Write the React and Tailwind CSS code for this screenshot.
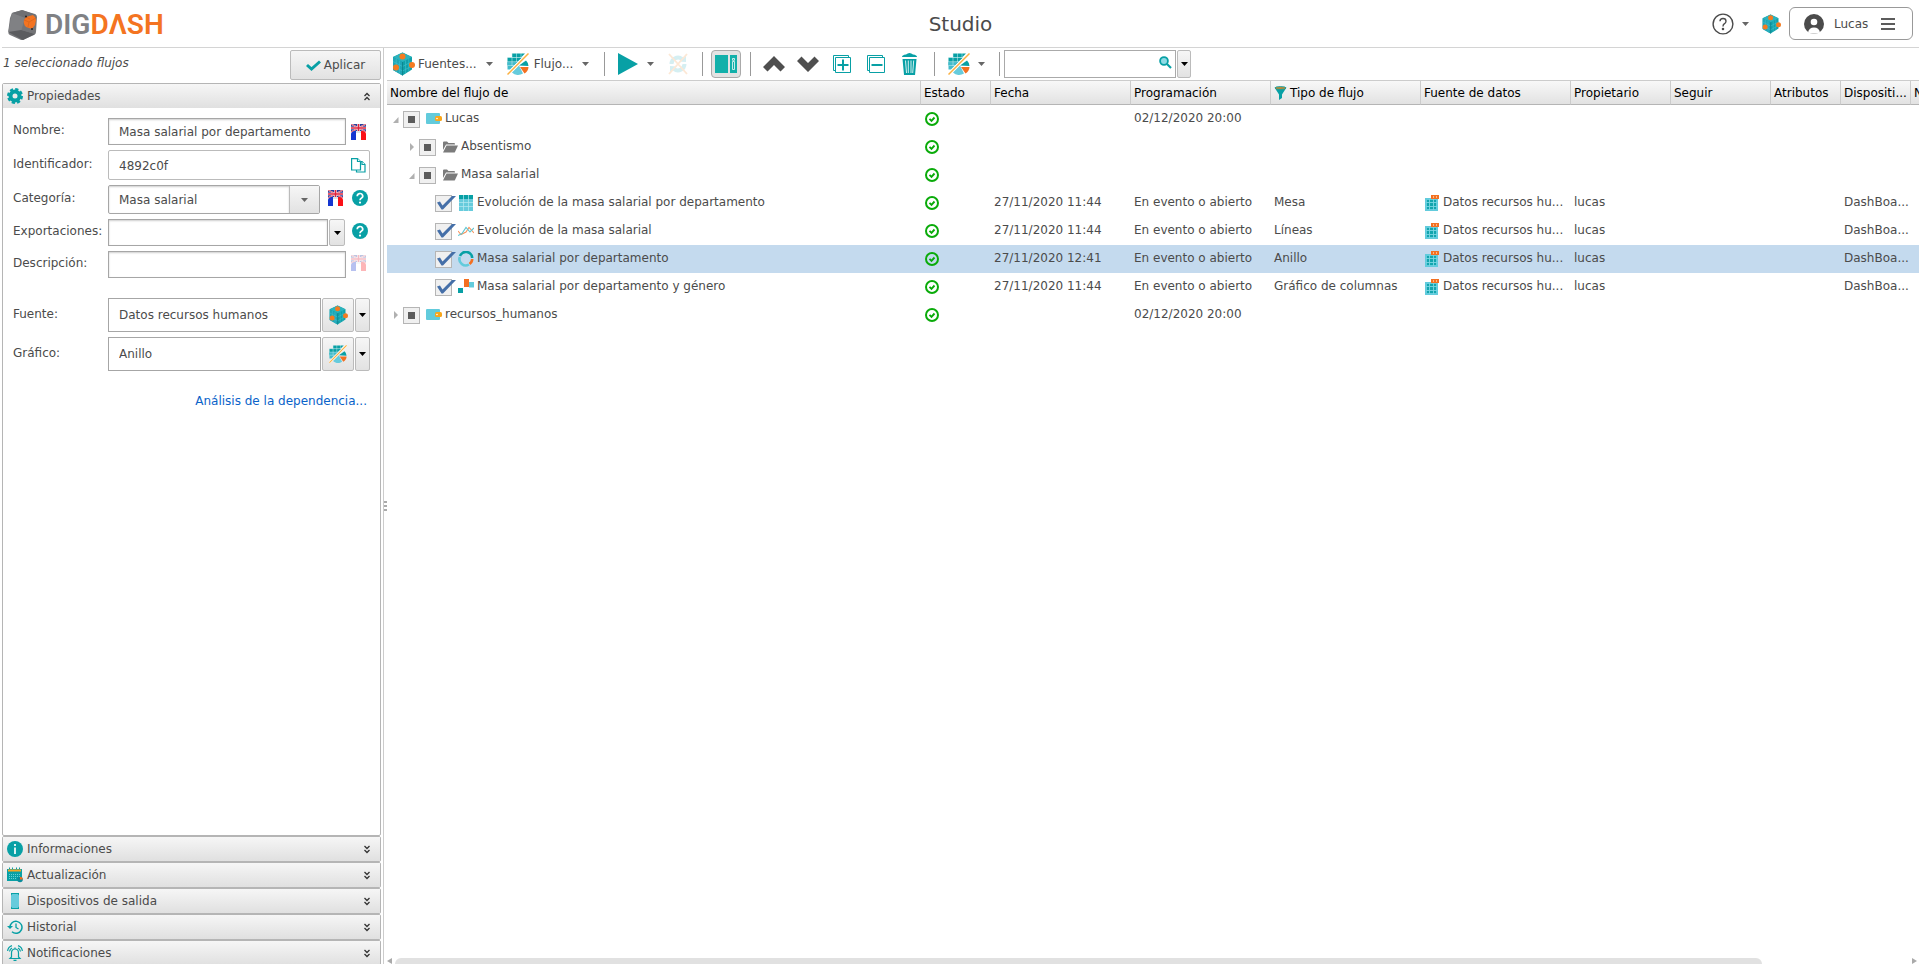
import React, { useState } from 'react';

const Caret = ({ className = 'text-[#666]', small = false }) => (
  <svg width={small ? 7 : 8} height={small ? 4 : 6} viewBox="0 0 8 6" preserveAspectRatio="none" className={`shrink-0 ${className}`}>
    <path d="M0 0H8L4 6Z" fill="currentColor" />
  </svg>
);

const CubeIcon = ({ size = 24 }) => (
  <svg width={size} height={size} viewBox="0 0 24 24" className="shrink-0">
    <path d="M11.500 0.500L21 5V17.500L11.500 23.500L2 18V5Z" fill="#10a0a8" />
    <path d="M11.500 0.500L21 5L11.500 10L2 5Z" fill="#2bb3bd" />
    <path d="M2 5L11.500 10V23.500L2 18Z" fill="#1fa6b6" />
    <path d="M2 9.500L11.500 14.500L21 9.500M2 14L11.500 19L21 14M5.200 6.500V20M8.400 8.500V22M14.600 8.500V21.500M17.800 6.500V19.500" stroke="#45c2d0" strokeWidth=".6" fill="none" />
    <path d="M11.500 10V23.500" stroke="#0a7f88" strokeWidth=".8" />
    <circle cx="11.500" cy="4.500" r="3" fill="#f47b20" />
    <circle cx="5" cy="15.500" r="3" fill="#f47b20" />
    <circle cx="21" cy="13" r="3" fill="#f47b20" />
  </svg>
);

const ChartIcon = ({ size = 22 }) => (
  <svg width={size} height={size} viewBox="0 0 22 22" className="shrink-0">
    <path d="M5 0.500H18L14 4.500H5Z" fill="#08a0a5" />
    <path d="M0.500 4.500H15L6 13H0.500Z" fill="#08a0a5" />
    <path d="M0.500 8.700H10.500L3 16.500H0.500Z" fill="#42bccb" />
    <path d="M5 0V13M9.500 0V9M14 0V5M0 4.500H16M0 8.700H11M0 12.500H7" stroke="#d5f0f4" strokeWidth=".5" />
    <path d="M12 12.500L19 7.500A8 8 0 0 1 21.500 13Z" fill="#08a0a5" />
    <path d="M12 12.500L5 19.500A9 9 0 0 0 16 20.500Z" fill="#66cbdc" />
    <path d="M13 14H21.500A8 8 0 0 1 17.500 20.500Z" fill="#f37021" />
    <path d="M0.500 21.500L21.500 0.500" stroke="#fff" strokeWidth="2.600" />
    <path d="M0.500 21.500L21.500 0.500" stroke="#fbb040" strokeWidth="1.500" />
  </svg>
);

const FlagIcon = ({ faded = false }) => (
  <svg width="15" height="16" viewBox="0 0 15 16" className={`shrink-0 ${faded ? 'opacity-30' : ''}`}>
    <path d="M0 0H15V8H0Z" fill="#2a3f9b" />
    <path d="M0 0L15 8M15 0L0 8" stroke="#fff" strokeWidth="1.400" />
    <path d="M0 0L15 8M15 0L0 8" stroke="#e0213a" strokeWidth=".8" />
    <path d="M7.500 0V8M0 4H15" stroke="#fff" strokeWidth="2.600" />
    <path d="M7.500 0V8M0 4H15" stroke="#e0213a" strokeWidth="1.600" />
    <path d="M0 16V10Q0 7.500 4 7H5V16Z" fill="#1536d0" />
    <path d="M5 7H10V16H5Z" fill="#fff" />
    <path d="M15 16V10Q15 7.500 11 7H10V16Z" fill="#fb1017" />
    <path d="M5 8H10" stroke="#9aa" strokeWidth=".6" />
  </svg>
);

const HelpIcon = () => (
  <svg width="16" height="16" viewBox="0 0 16 16">
    <circle cx="8" cy="8" r="8" fill="#08a0a5" />
    <path d="M5.300 6.200A2.700 2.500 0 1 1 9.300 8.200Q8 9 8 10.300" stroke="#fff" strokeWidth="1.700" fill="none" />
    <circle cx="8" cy="12.600" r="1.100" fill="#fff" />
  </svg>
);

const CopyIcon = () => (
  <svg width="15" height="15" viewBox="0 0 15 15" fill="#fff" stroke="#08a0a5" strokeWidth="1.200">
    <path d="M5.500 3.600H11L14 6.500V14H5.500Z" />
    <path d="M11 3.600V6.500H14" />
    <path d="M.6.600H6.500L9.500 3.500V12H.6Z" />
    <path d="M6.500.600V3.500H9.500" />
  </svg>
);

const GearIcon = () => (
  <svg width="16" height="16" viewBox="0 0 16 16">
    <circle cx="8" cy="8" r="4.500" fill="none" stroke="#08a0a5" strokeWidth="4" />
    <circle cx="8" cy="8" r="6.800" fill="none" stroke="#08a0a5" strokeWidth="2.400" strokeDasharray="3.200 2.140" />
  </svg>
);

const InfoIcon = () => (
  <svg width="16" height="16" viewBox="0 0 16 16">
    <circle cx="8" cy="8" r="8" fill="#08a0a5" />
    <path d="M8 3V5M8 6.500V13" stroke="#fff" strokeWidth="1.700" />
  </svg>
);

const CalendarIcon = () => (
  <svg width="16" height="16" viewBox="0 0 16 16">
    <path d="M0 2H15V14H0Z" fill="#08a0a5" />
    <path d="M1 2.500H14V4.500H1Z" fill="#f5a623" />
    <path d="M2.500 0.500V2M5.500 0.500V2M9.500 0.500V2M12.500 0.500V2" stroke="#08a0a5" />
    <path d="M2 7.500H14M2 9.500H14M2 11.500H10" stroke="#7fdbe2" strokeWidth=".8" strokeDasharray="1 1" />
    <circle cx="13" cy="12.500" r="2.800" fill="#0b8c9c" />
    <path d="M13 12.500V9.700A2.800 2.800 0 0 1 15.800 12.500Z" fill="#f37021" />
  </svg>
);

const PhoneIcon = () => (
  <svg width="16" height="16" viewBox="0 0 16 16">
    <rect x="4" width="8" height="16" rx="1" fill="#66cbdc" />
    <path d="M4 0H6L4 2.500ZM12 0H10L12 2.500ZM4 16H6L4 13.500ZM12 16H10L12 13.500Z" fill="#08a0a5" />
    <path d="M5 .5H11M5 15.500H11" stroke="#08a0a5" />
  </svg>
);

const HistoryIcon = () => (
  <svg width="16" height="16" viewBox="0 0 16 16" fill="none" stroke="#08a0a5" strokeWidth="1.500">
    <path d="M3 9A6 6 0 1 1 5 12.800" />
    <path d="M0 7L3 10L6 7Z" fill="#08a0a5" stroke="none" />
    <path d="M9 4.500V8.500L11.500 10" strokeWidth="1.300" />
  </svg>
);

const BellIcon = () => (
  <svg width="16" height="16" viewBox="0 0 16 16" fill="none" stroke="#08a0a5" strokeWidth="1.200">
    <path d="M4.500 12V8Q4.500 4 8 4Q11.500 4 11.500 8V12L13 13.500H3Z" />
    <path d="M6.500 15.300H9.500M8 4V2.500" />
    <path d="M.6 6Q1 2 5 .6M2.500 6.500Q3 4 5 3M15.400 6Q15 2 11 .6M13.500 6.500Q13 4 11 3" />
  </svg>
);

const DoubleChevron = ({ up }) => (
  <svg width="6" height="9" viewBox="0 0 6 9" fill="none" stroke="#333" strokeWidth="1.300" className={up ? '' : 'rotate-180'}>
    <path d="M.5 4L3 1.500L5.500 4M.5 8L3 5.500L5.500 8" />
  </svg>
);

const WalletIcon = () => (
  <svg width="16" height="12" viewBox="0 0 16 12">
    <rect width="14" height="11" rx="1" fill="#62cbdc" />
    <rect x="9" y="3" width="7" height="5" rx="1.500" fill="#f9a61a" />
    <circle cx="11" cy="5.500" r=".8" fill="#fff" />
  </svg>
);

const FolderIcon = () => (
  <svg width="16" height="12" viewBox="0 0 16 12" fill="#7b7b7b">
    <path d="M1 9V1.500Q1 .5 2 .5H5L6.500 2H12Q13 2 13 3V3.500H4Z" />
    <path d="M4.500 4.500H16L13 11Q12.700 11.500 12 11.500H1Z" />
  </svg>
);

const GridIcon = () => (
  <svg width="16" height="16" viewBox="0 0 16 16">
    <path d="M1 0H15V16H1Z" fill="#66cbdc" />
    <path d="M1 0H15V4H1Z" fill="#08a0a5" />
    <path d="M5.500 0V16M10.500 0V16M1 7.500H15M1 11.500H15" stroke="#b7eaf1" strokeWidth=".7" />
  </svg>
);

const LinesIcon = () => (
  <svg width="16" height="16" viewBox="0 0 16 16" fill="none">
    <path d="M0 8L3 11.500L8 9L11 4.500L16 10" stroke="#f9925a" strokeWidth="1.100" />
    <path d="M0 12.500L4 10.500L8 4.500L12 9L16 5" stroke="#5fc6d3" strokeWidth="1.100" />
  </svg>
);

const RingIcon = () => (
  <svg width="16" height="16" viewBox="0 0 16 16" fill="none" strokeWidth="2.600">
    <path d="M2 5A6.300 6.300 0 0 1 14.200 7" stroke="#08a0a5" />
    <path d="M14.200 8A6.300 6.300 0 0 1 11.500 13" stroke="#f37021" />
    <path d="M11 13.500A6.300 6.300 0 0 1 1.800 6" stroke="#62cbdc" />
  </svg>
);

const ColumnsIcon = () => (
  <svg width="16" height="16" viewBox="0 0 16 16">
    <path d="M0 9H5V14H0Z" fill="#08a0a5" />
    <path d="M6 0H11V8H6Z" fill="#f37021" />
    <path d="M11 3H16V8.500H11Z" fill="#62cbdc" />
  </svg>
);

const SourceIcon = () => (
  <svg width="15" height="16" viewBox="0 0 15 16" className="shrink-0">
    <path d="M1 3H14V16H1Z" fill="#62cbdc" />
    <path d="M3 5H12V14H3Z" fill="#12a5ae" />
    <path d="M5.500 4V15M9.500 4V15M2 7.500H13M2 11.500H13" stroke="#7ad6e2" strokeWidth=".9" />
    <path d="M7 0H15V4H7Z" fill="#f37021" />
    <path d="M9.500 1V3M12.500 1V3" stroke="#fbb98a" />
  </svg>
);

const StatusOk = () => (
  <svg width="16" height="14" viewBox="0 0 16 14" role="img" aria-label="OK">
    <circle cx="8" cy="7" r="6" fill="none" stroke="#0aab0a" strokeWidth="2" />
    <path d="M5.500 6.800L7.500 8.800L10.500 5.500" fill="none" stroke="#0aab0a" strokeWidth="1.900" />
  </svg>
);

const FunnelIcon = () => (
  <svg width="13" height="14" viewBox="0 0 13 14">
    <path d="M.5 1.500H12.500L8 8.500V12L5 14V8.500Z" fill="#08a0a5" />
    <ellipse cx="6.500" cy="2" rx="5.500" ry="1.500" fill="#b58a3a" stroke="#08a0a5" strokeWidth=".8" />
  </svg>
);

const inputClass = 'h-full w-full min-w-0 border border-[#a6a6a6] bg-white pl-[10px] shadow-[inset_0_1px_2px_#cfcfcf] outline-none';
const buttonClass = 'flex items-center justify-center rounded-[2px] border border-[#bbb] bg-linear-to-b from-[#f6f6f6] to-[#e2e2e2]';

const Field = ({ id, label, height, children }) => (
  <div className={`flex ${height}`}>
    <label htmlFor={id} className="flex w-[95px] shrink-0 items-center pb-[3px]">{label}</label>
    <div className="flex min-w-0 flex-1 items-center">{children}</div>
  </div>
);

const Logo = () => (
  <a href="#" className="flex items-center gap-[7px]" aria-label="DigDash">
    <svg width="30" height="31" viewBox="0 0 30 31">
      <path d="M4 3L13 .5Q15 0 17 1L27 4Q29 5 29 7L28 22Q28 24 26 25L16 29.500Q14 30.500 12 29.500L2 25Q0 24 .3 21L2 8Z" fill="#77787b" />
      <path d="M4 3L14 0L28 5L17 8Z" fill="#6f7073" />
      <path d="M4 3L17 8L13 21L.3 22Z" fill="#808184" />
      <path d="M.3 22L13 20L27 24L15 30Z" fill="#5b5c5f" />
      <path d="M17 8L28 5L27 24L14 20Z" fill="#737477" />
      <path d="M18 7L25 5Q28 7 28 10L27 15L24 19L18 17Q15 14 16 10Z" fill="#f47421" />
      <path d="M16 10L21 12L28 8M21 12L20 17M18 7L22 9" stroke="#d9641a" strokeWidth=".8" fill="none" />
      <circle cx="18" cy="6.500" r="1" fill="#222" />
      <circle cx="24" cy="19" r="1" fill="#222" />
    </svg>
    <span className="font-[Roboto,sans-serif] text-[28px] leading-8 font-semibold">
      <span className="text-[#808184]">DIG</span>
      <span className="text-[#f47421]">DΛSH</span>
    </span>
  </a>
);

const Header = () => (
  <header className="ml-[2px] flex h-12 shrink-0 items-center border-b border-[#d4d4d4] pl-[6px]">
    <div className="flex-1 pt-[3px]"><Logo /></div>
    <h1 className="text-xl text-[#4b4b4b]">Studio</h1>
    <div className="flex flex-1 items-center justify-end pr-[6px]">
      <button type="button" className="flex items-center gap-2" aria-label="Ayuda">
        <svg width="22" height="22" viewBox="0 0 22 22" fill="none" stroke="#4b4b4b" strokeWidth="1.400">
          <circle cx="11" cy="11" r="9.900" />
          <path d="M8 8.300Q8 5.500 11 5.500Q14 5.500 14 8.200Q14 9.800 12.200 10.900Q11 11.700 11 13.500" />
          <circle cx="11" cy="16" r=".6" fill="#4b4b4b" />
        </svg>
        <Caret small />
      </button>
      <button type="button" className="mr-2 ml-3" aria-label="Fuentes"><CubeIcon size={20} /></button>
      <button type="button" className="flex h-[33px] w-[124px] items-center rounded-md border border-[#999] pl-[14px]">
        <svg width="20" height="20" viewBox="0 0 20 20">
          <circle cx="10" cy="10" r="10" fill="#4b4b4b" />
          <circle cx="10" cy="8" r="3.300" fill="#fff" />
          <path d="M4 18.500Q5 13.500 10 13.500Q15 13.500 16 18.500Q10 21 4 18.500Z" fill="#fff" />
        </svg>
        <span className="ml-[10px]">Lucas</span>
        <svg width="14" height="12" viewBox="0 0 14 12" className="ml-[13px]">
          <path d="M0 1H14M0 6H14M0 11H14" stroke="#5c5c5c" strokeWidth="2" />
        </svg>
      </button>
    </div>
  </header>
);

const SectionHeader = ({ icon, title, open }) => (
  <button type="button" className="flex h-6 w-full items-center gap-1 bg-linear-to-b from-[#f6f6f6] to-[#e0e0e0] pr-[10px] pl-1 text-left">
    {icon}
    <span className="flex-1">{title}</span>
    <DoubleChevron up={open} />
  </button>
);

const SECTIONS = [
  { title: 'Informaciones', icon: <InfoIcon /> },
  { title: 'Actualización', icon: <CalendarIcon /> },
  { title: 'Dispositivos de salida', icon: <PhoneIcon /> },
  { title: 'Historial', icon: <HistoryIcon /> },
  { title: 'Notificaciones', icon: <BellIcon /> },
];

const PropertiesPanel = () => (
  <aside className="flex w-[381px] shrink-0 flex-col overflow-hidden pl-[2px]">
    <div className="mt-[2px] mb-[3px] flex h-[30px] shrink-0 justify-between">
      <em className="pt-[5px] pl-px">1 seleccionado flujos</em>
      <button type="button" className={`${buttonClass} w-[91px] gap-[3px]`}>
        <svg width="15" height="11" viewBox="0 0 15 11"><path d="M1 5L5.500 9L14 1.500" fill="none" stroke="#08a0a5" strokeWidth="3" /></svg>
        Aplicar
      </button>
    </div>
    <section className="flex flex-1 flex-col rounded-[2px] border border-[#b5b5b5]">
      <SectionHeader icon={<GearIcon />} title="Propiedades" open />
      <form className="flex flex-col gap-[5px] pt-[10px] pr-[10px] pl-[10px]">
        <Field id="nombre" label="Nombre:" height="h-[27px]">
          <input id="nombre" className={inputClass} defaultValue="Masa salarial por departamento" />
          <span className="w-6 shrink-0 pl-[5px]"><FlagIcon /></span>
        </Field>
        <Field id="identificador" label="Identificador:" height="h-[30px]">
          <div className="flex h-full flex-1 items-center rounded-[2px] border border-[#bbb] pr-[3px]">
            <input id="identificador" className="min-w-0 flex-1 pt-[2px] pl-[10px] outline-none" defaultValue="4892c0f" readOnly />
            <button type="button" aria-label="Copiar"><CopyIcon /></button>
          </div>
        </Field>
        <Field id="categoria" label="Categoría:" height="h-[29px]">
          <div className="flex h-full w-[212px] rounded-[2px] border border-[#a6a6a6]">
            <select id="categoria" className="min-w-0 flex-1 appearance-none pl-[10px] shadow-[inset_0_1px_2px_#cfcfcf] outline-none">
              <option>Masa salarial</option>
            </select>
            <span className="flex w-[30px] items-center justify-center border-l border-[#bbb] bg-linear-to-b from-[#f6f6f6] to-[#e2e2e2]"><Caret small /></span>
          </div>
          <span className="flex flex-1 justify-between pr-[2px] pb-[3px] pl-2"><FlagIcon /><HelpIcon /></span>
        </Field>
        <Field id="exportaciones" label="Exportaciones:" height="h-[27px]">
          <input id="exportaciones" className={inputClass} />
          <button type="button" className={`${buttonClass} ml-px h-full w-4 shrink-0`} aria-label="Elegir exportaciones"><Caret small className="text-black" /></button>
          <span className="w-[25px] shrink-0 pb-[3px] pl-[7px]"><HelpIcon /></span>
        </Field>
        <Field id="descripcion" label="Descripción:" height="h-[27px]">
          <input id="descripcion" className={inputClass} />
          <span className="w-6 shrink-0 pb-[3px] pl-[5px]"><FlagIcon faded /></span>
        </Field>
        <div className="mt-[15px] flex flex-col gap-[5px]">
          <Field id="fuente" label="Fuente:" height="h-[34px]">
            <input id="fuente" className="h-full min-w-0 flex-1 border border-[#a6a6a6] pl-[10px]" defaultValue="Datos recursos humanos" />
            <button type="button" className={`${buttonClass} ml-px h-full w-8`} aria-label="Fuente"><CubeIcon size={20} /></button>
            <button type="button" className={`${buttonClass} ml-px h-full w-[15px]`} aria-label="Opciones de fuente"><Caret small className="text-black" /></button>
          </Field>
          <Field id="grafico" label="Gráfico:" height="h-[34px]">
            <input id="grafico" className="h-full min-w-0 flex-1 border border-[#a6a6a6] pl-[10px]" defaultValue="Anillo" />
            <button type="button" className={`${buttonClass} ml-px h-full w-8`} aria-label="Gráfico"><ChartIcon size={18} /></button>
            <button type="button" className={`${buttonClass} ml-px h-full w-[15px]`} aria-label="Opciones de gráfico"><Caret small className="text-black" /></button>
          </Field>
        </div>
        <a href="#" className="mt-[17px] self-end pr-[3px] text-[#0a63c9]">Análisis de la dependencia...</a>
      </form>
    </section>
    {/* the last section runs slightly under the window edge */}
    <div className="-mb-[2px] shrink-0">
      {SECTIONS.map((section) => (
        <section key={section.title} className="rounded-[2px] border border-[#b5b5b5]">
          <SectionHeader icon={section.icon} title={section.title} />
        </section>
      ))}
    </div>
  </aside>
);

const Separator = () => <span className="h-6 w-px shrink-0 bg-[#999]" />;

const Toolbar = () => (
  <div className="flex h-8 shrink-0 items-center pb-px pl-1">
    <button type="button" className="flex items-center"><CubeIcon /><span className="mr-[9px] ml-[3px]">Fuentes...</span><Caret small /></button>
    <button type="button" className="ml-[14px] flex items-center"><ChartIcon /><span className="mr-[9px] ml-[5px]">Flujo...</span><Caret small /></button>
    <span className="w-[15px]" />
    <Separator />
    <button type="button" className="ml-[13px] flex items-center gap-[9px]" aria-label="Ejecutar">
      <svg width="20" height="24" viewBox="0 0 20 24"><path d="M0 1L20 12L0 23Z" fill="#08a0a5" /></svg>
      <Caret small />
    </button>
    <button type="button" disabled className="mr-[14px] ml-[14px] opacity-25" aria-label="Actualizar">
      <svg width="20" height="22" viewBox="0 0 20 22" fill="none">
        <path d="M3.500 11A6.500 6.500 0 0 1 14 6M16.500 11A6.500 6.500 0 0 1 6 16" stroke="#5bc0cf" strokeWidth="4" />
        <path d="M11 8.500L18 9V2ZM9 13.500L2 13V20Z" fill="#5bc0cf" />
        <path d="M1 1L19 21M19 1L1 21" stroke="#f9a65a" strokeWidth="1.800" />
      </svg>
    </button>
    <Separator />
    <button type="button" className="mr-[9px] ml-2 flex h-7 w-[30px] items-center justify-center rounded-[4px] border border-[#aaa] bg-[#e3e3e3]" aria-label="Panel">
      <svg width="22" height="20" viewBox="0 0 22 20">
        <path d="M0 1H13V19H0ZM15 1H22V19H15Z" fill="#12b0aa" />
        <path d="M17.500 7.500H19.500V15.500H17.500ZM17.500 4.500H19.500V6.300H17.500Z" fill="none" stroke="#d9f3f2" strokeWidth=".9" />
      </svg>
    </button>
    <Separator />
    <button type="button" className="ml-3" aria-label="Subir">
      <svg width="22" height="16" viewBox="0 0 22 16"><path d="M0 11L11 0L22 11L17.500 15.500L11 9L4.500 15.500Z" fill="#4f4f4f" /></svg>
    </button>
    <button type="button" className="ml-3" aria-label="Bajar">
      <svg width="22" height="16" viewBox="0 0 22 16"><path d="M0 5L4.500 .5L11 7L17.500 .5L22 5L11 16Z" fill="#4f4f4f" /></svg>
    </button>
    <button type="button" className="ml-[14px]" aria-label="Desplegar todo">
      <svg width="18" height="18" viewBox="0 0 18 18" fill="#fff" stroke="#08a0a5"><path d="M.5.500H15.500V15.500H.5Z" /><path d="M2.500 2.500H17.500V17.500H2.500Z" /><path d="M10 4.500V15.500M4.500 10H15.500" strokeWidth="2" /></svg>
    </button>
    <button type="button" className="ml-4" aria-label="Contraer todo">
      <svg width="18" height="18" viewBox="0 0 18 18" fill="#fff" stroke="#08a0a5"><path d="M.5.500H15.500V15.500H.5Z" /><path d="M2.500 2.500H17.500V17.500H2.500Z" /><path d="M4.500 10H15.500" strokeWidth="2" /></svg>
    </button>
    <button type="button" className="mr-4 ml-4" aria-label="Eliminar">
      <svg width="17" height="24" viewBox="0 0 17 24">
        <path d="M1 5Q1 3 5 2.500Q8.500-.5 12 2.500Q16 3 16 5Z" fill="#08a0a5" />
        <path d="M1.500 7H15.500L14 23H3Z" fill="#08a0a5" />
        <path d="M4.500 8.500L5.500 21M7.300 8.500V21M10 8.500V21M12.700 8.500L11.700 21" stroke="#d5f0f0" />
      </svg>
    </button>
    <Separator />
    <button type="button" className="mr-[14px] ml-[13px] flex items-center gap-2" aria-label="Gráficos"><ChartIcon /><Caret small /></button>
    <Separator />
    <div className="ml-1 flex h-7 w-[172px] items-center border border-[#aaa] pr-[3px] pb-[2px]">
      <input type="search" aria-label="Buscar" className="min-w-0 flex-1 pl-1 outline-none" />
      <svg width="13" height="13" viewBox="0 0 13 13"><circle cx="5" cy="5" r="3.900" fill="#8fdbe5" stroke="#08a0a5" strokeWidth="1.800" /><path d="M8 8L12 12" stroke="#08a0a5" strokeWidth="2.200" /></svg>
    </div>
    <button type="button" className={`${buttonClass} ml-px h-7 w-[14px] shrink-0`} aria-label="Opciones de búsqueda"><Caret small className="text-black" /></button>
  </div>
);

const COLUMNS = [
  { title: 'Nombre del flujo de', width: 'w-[534px]' },
  { title: 'Estado', width: 'w-[70px]' },
  { title: 'Fecha', width: 'w-[140px]' },
  { title: 'Programación', width: 'w-[140px]' },
  { title: 'Tipo de flujo', width: 'w-[150px]', filter: true },
  { title: 'Fuente de datos', width: 'w-[150px]' },
  { title: 'Propietario', width: 'w-[100px]' },
  { title: 'Seguir', width: 'w-[100px]' },
  { title: 'Atributos', width: 'w-[70px]' },
  { title: 'Dispositi...', width: 'w-[70px]' },
  { title: 'N', width: 'w-[172px]' },
];

const EVENT = 'En evento o abierto';
const SOURCE = 'Datos recursos hu...';

const ROWS = [
  { level: 0, name: 'Lucas', icon: <WalletIcon />, open: true, schedule: '02/12/2020 20:00' },
  { level: 1, name: 'Absentismo', icon: <FolderIcon />, open: false },
  { level: 1, name: 'Masa salarial', icon: <FolderIcon />, open: true },
  { level: 2, name: 'Evolución de la masa salarial por departamento', icon: <GridIcon />, date: '27/11/2020 11:44', schedule: EVENT, type: 'Mesa', source: SOURCE },
  { level: 2, name: 'Evolución de la masa salarial', icon: <LinesIcon />, date: '27/11/2020 11:44', schedule: EVENT, type: 'Líneas', source: SOURCE },
  { level: 2, name: 'Masa salarial por departamento', icon: <RingIcon />, date: '27/11/2020 12:41', schedule: EVENT, type: 'Anillo', source: SOURCE },
  { level: 2, name: 'Masa salarial por departamento y género', icon: <ColumnsIcon />, date: '27/11/2020 11:44', schedule: EVENT, type: 'Gráfico de columnas', source: SOURCE },
  { level: 0, name: 'recursos_humanos', icon: <WalletIcon />, open: false, schedule: '02/12/2020 20:00' },
];

const INDENT = ['pl-0', 'pl-4', 'pl-8'];

const TreeCheckbox = ({ name, leaf }) => (
  <span className="relative h-[17px] w-[17px] shrink-0">
    <input type="checkbox" aria-label={name} defaultChecked={leaf} className="block h-[17px] w-[17px] appearance-none border border-[#b5b5b5] bg-[#f0f0f0]" />
    <svg width="21" height="17" viewBox="0 0 21 17" className="pointer-events-none absolute top-0 left-0">
      {leaf
        ? <path d="M2 7.500L5 6.500L7.500 10.500L17 1L21 1L8 14.500H6.500Z" fill="#456fa8" />
        : <path d="M5 5H12V12H5Z" fill="#5c5c5c" />}
    </svg>
  </span>
);

const TreeCell = ({ row }) => {
  const leaf = row.level === 2;

  return (
    <div className={`flex items-center ${INDENT[row.level]}`}>
      <span className="flex w-4 shrink-0 justify-center pl-px">
        {!leaf && (
          <svg width="6" height="8" viewBox="0 0 6 8" fill="#b0b0b0">
            <path d={row.open ? 'M5.500 2V8H0Z' : 'M1 0L5 4L1 8Z'} />
          </svg>
        )}
      </span>
      <TreeCheckbox name={row.name} leaf={leaf} />
      <span className="ml-[6px] flex w-4 justify-center">{row.icon}</span>
      <span className="pb-[2px] pl-[3px]">{row.name}</span>
    </div>
  );
};

const FlowTable = () => {
  const [selected, setSelected] = useState(5);

  return (
    <div className="flex-1 overflow-hidden">
      <table className="w-[1696px] table-fixed border-separate border-spacing-0">
        <thead>
          <tr className="h-[25px]">
            {COLUMNS.map((column) => (
              <th key={column.title} className={`${column.width} border-t border-r border-b border-t-[#ccc] border-r-[#ccc] border-b-[#b5b5b5] bg-linear-to-b from-[#f8f8f8] to-[#e2e2e2] py-0 pr-0 pl-[3px] text-left font-normal whitespace-nowrap text-black`}>
                {column.filter ? <span className="flex items-center gap-[3px]"><FunnelIcon />{column.title}</span> : column.title}
              </th>
            ))}
          </tr>
        </thead>
        <tbody>
          {ROWS.map((row, index) => (
            <tr key={row.name} onClick={() => setSelected(index)} className={`h-7 whitespace-nowrap ${index === selected ? 'bg-[#c4daee]' : ''}`}>
              <td className="p-0"><TreeCell row={row} /></td>
              <td className="px-[3px]"><StatusOk /></td>
              <td className="px-[3px] pb-[2px]">{row.date}</td>
              <td className="px-[3px] pb-[2px]">{row.schedule}</td>
              <td className="px-[3px] pb-[2px]">{row.type}</td>
              <td className="pl-[3px]">
                {row.source && (
                  <div className="flex items-center gap-1">
                    <SourceIcon />
                    <span className="pb-[2px]">{row.source}</span>
                  </div>
                )}
              </td>
              <td className="px-[3px] pb-[2px]">{row.source && 'lucas'}</td>
              <td />
              <td />
              <td className="pb-[2px] pl-[3px]">{row.source && 'DashBoa...'}</td>
              <td />
            </tr>
          ))}
        </tbody>
      </table>
    </div>
  );
};

const ScrollBar = () => (
  <div className="flex h-[6px] shrink-0 items-start gap-[3px] overflow-hidden pr-[2px]">
    <svg width="5" height="6" viewBox="0 0 5 6" className="shrink-0"><path d="M5 0V6L0 3Z" fill="#aaa" /></svg>
    <div className="flex flex-1">
      <div className="h-3 grow-[93] rounded-full bg-[#e1e1e1]" />
      <div className="grow-[10]" />
    </div>
    <svg width="5" height="6" viewBox="0 0 5 6" className="shrink-0"><path d="M0 0V6L5 3Z" fill="#aaa" /></svg>
  </div>
);

const App = () => (
  <div className="flex h-screen flex-col overflow-hidden bg-white font-['DejaVu_Sans',Verdana,sans-serif] text-xs text-[#4b4b4b]">
    <Header />
    <div className="flex min-h-0 flex-1">
      <PropertiesPanel />
      <div className="ml-[2px] flex w-1 shrink-0 flex-col items-center justify-center gap-[2px] border-l border-[#ccc]">
        <span className="h-[2px] w-[3px] bg-[#aaa]" />
        <span className="h-[2px] w-[3px] bg-[#aaa]" />
        <span className="h-[2px] w-[3px] bg-[#aaa]" />
      </div>
      <main className="flex min-w-0 flex-1 flex-col">
        <Toolbar />
        <FlowTable />
        <ScrollBar />
      </main>
    </div>
  </div>
);

export default App;
